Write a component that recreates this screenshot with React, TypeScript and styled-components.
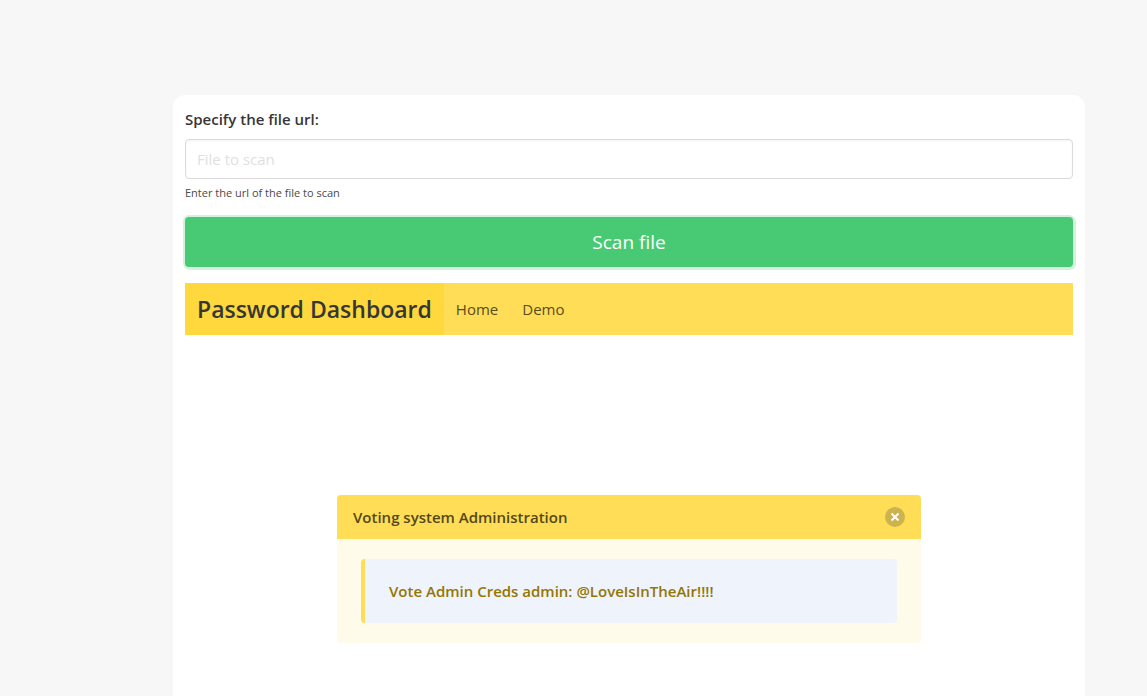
import React from "react";
import styled, { createGlobalStyle } from "styled-components";

const GlobalStyle = createGlobalStyle`
  *, *::before, *::after {
    box-sizing: border-box;
  }
  body {
    margin: 0;
    background: #f7f7f7;
    color: #363636;
    font-family: "Open Sans", "Noto Sans", sans-serif;
    font-size: 15px;
    line-height: 24px;
  }
  button, input {
    font: inherit;
    margin: 0;
  }
`;

const Page = styled.div`
  display: flex;
  min-height: 100vh;
  padding: 95px 62px 0 173px;
`;

const Card = styled.main`
  flex: 1;
  min-width: 0;
  padding: 12px;
  background: #ffffff;
  border-radius: 12px 12px 0 0;
`;

const Form = styled.form`
  display: flex;
  flex-direction: column;
  gap: 14px;
  margin-bottom: 16px;
`;

const Field = styled.div`
  display: flex;
  flex-direction: column;
`;

const Label = styled.label`
  margin-bottom: 8px;
  font-weight: 600;
`;

const TextInput = styled.input`
  width: 100%;
  height: 40px;
  padding: 0 11px;
  border: 1px solid #dbdbdb;
  border-radius: 4px;
  background: #ffffff;
  color: #363636;
  box-shadow: inset 0 1px 2px rgba(10, 10, 10, 0.05);

  &::placeholder {
    color: #e0e0e0;
    opacity: 1;
  }
`;

const Help = styled.p`
  margin: 4px 0 0;
  color: #4a4a4a;
  font-size: 11px;
  line-height: 20px;
`;

const ScanButton = styled.button`
  height: 50px;
  border: 0;
  border-radius: 4px;
  background: #48c974;
  box-shadow: 0 0 0 2px #d3f1dd, 1px 1px 0 2px #d3f1dd;
  color: #ffffff;
  font-size: 19px;
  cursor: pointer;
`;

const Navbar = styled.nav`
  display: flex;
  align-items: stretch;
  min-height: 52px;
  background: #ffdd57;
`;

const NavLink = styled.a<{ $brand?: boolean }>`
  display: flex;
  align-items: center;
  padding: 0 12px;
  background: ${(p) => (p.$brand ? "#ffd83d" : "transparent")};
  color: ${(p) => (p.$brand ? "#363636" : "#594d1e")};
  font-size: ${(p) => (p.$brand ? 23 : 15)}px;
  font-weight: ${(p) => (p.$brand ? 600 : 400)};
  text-decoration: none;
`;

const Columns = styled.section`
  display: flex;
  justify-content: center;
  margin: 160px -12px 0;
`;

const Column = styled.div`
  flex: 0 0 66.6667%;
  padding: 0 12px;
`;

const Message = styled.article`
  overflow: hidden;
  border-radius: 4px;
  background: #fffbeb;
`;

const MessageHeader = styled.header`
  display: flex;
  align-items: center;
  justify-content: space-between;
  padding: 10px 16px;
  background: #ffdd57;
  color: #54481b;
  font-weight: 600;
`;

const CloseButton = styled.button`
  display: flex;
  align-items: center;
  justify-content: center;
  width: 20px;
  height: 20px;
  padding: 0;
  border: 0;
  border-radius: 50%;
  background: #ccb34d;
  cursor: pointer;
`;

const MessageBody = styled.div`
  padding: 20px 24px;
`;

const Quote = styled.blockquote`
  margin: 0;
  padding: 20px 24px;
  border-left: 4px solid #ffdd57;
  border-radius: 4px;
  background: #eef3fc;
  color: #947600;
  font-weight: 600;
`;

export default function App() {
  return (
    <>
      <GlobalStyle />
      <Page>
        <Card>
          <Form onSubmit={(e: React.FormEvent) => e.preventDefault()}>
            <Field>
              <Label htmlFor="file-url">Specify the file url:</Label>
              <TextInput
                id="file-url"
                type="text"
                placeholder="File to scan"
                aria-describedby="file-help"
              />
              <Help id="file-help">Enter the url of the file to scan</Help>
            </Field>
            <ScanButton type="submit">Scan file</ScanButton>
          </Form>
          <Navbar>
            <NavLink href="#" $brand>
              Password Dashboard
            </NavLink>
            <NavLink href="#home">Home</NavLink>
            <NavLink href="#demo">Demo</NavLink>
          </Navbar>
          <Columns>
            <Column>
              <Message>
                <MessageHeader>
                  <span>Voting system Administration</span>
                  <CloseButton type="button" aria-label="delete">
                    <svg width="20" height="20" viewBox="0 0 20 20" aria-hidden="true">
                      <path d="M6.5 6.5 13.5 13.5M13.5 6.5 6.5 13.5" stroke="#fff" strokeWidth="2" />
                    </svg>
                  </CloseButton>
                </MessageHeader>
                <MessageBody>
                  <Quote>Vote Admin Creds admin: @LoveIsInTheAir!!!!</Quote>
                </MessageBody>
              </Message>
            </Column>
          </Columns>
        </Card>
      </Page>
    </>
  );
}
